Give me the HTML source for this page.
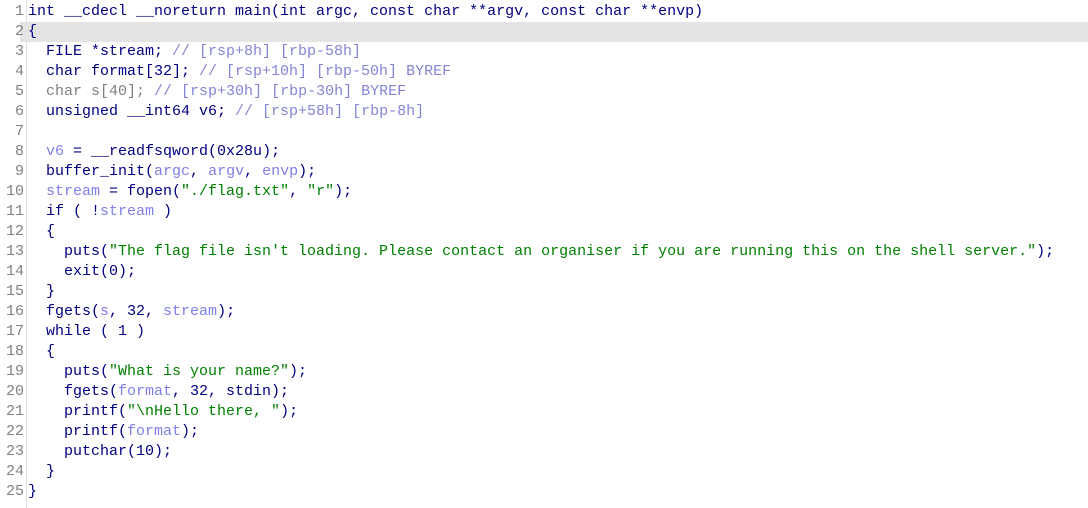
<!DOCTYPE html>
<html><head><meta charset="utf-8"><style>
html,body{margin:0;padding:0;background:#fff;width:1088px;height:508px;overflow:hidden}
#w{position:relative;width:1088px;height:508px}
.gut{position:absolute;left:26px;top:0;width:1px;height:508px;background:#e0e0e0}
.l{position:absolute;left:0;height:20px;line-height:20px;width:1088px;font-family:"Liberation Mono",monospace;font-size:15px;color:#000080;white-space:pre}
.n{position:absolute;left:0;width:24px;text-align:right;color:#808080}
.c{position:absolute;left:28px}
.hl{background:#e4e4e4;left:20px;width:1068px}
.v{color:#7f7fe8}.m{color:#8585d6}.s{color:#008000}.g{color:#808080}
</style></head><body><div id="w">
<div class="gut"></div>
<div class="l hl" style="top:22px"></div>
<div class="l" style="top:2px"><span class="n">1</span><span class="c">int __cdecl __noreturn main(int argc, const char **argv, const char **envp)</span></div>
<div class="l" style="top:22px"><span class="n">2</span><span class="c">{</span></div>
<div class="l" style="top:42px"><span class="n">3</span><span class="c">  FILE *stream; <span class="m">// [rsp+8h] [rbp-58h]</span></span></div>
<div class="l" style="top:62px"><span class="n">4</span><span class="c">  char format[32]; <span class="m">// [rsp+10h] [rbp-50h] BYREF</span></span></div>
<div class="l" style="top:82px"><span class="n">5</span><span class="c"><span class="g">  char s[40];</span> <span class="m">// [rsp+30h] [rbp-30h] BYREF</span></span></div>
<div class="l" style="top:102px"><span class="n">6</span><span class="c">  unsigned __int64 v6; <span class="m">// [rsp+58h] [rbp-8h]</span></span></div>
<div class="l" style="top:122px"><span class="n">7</span><span class="c"></span></div>
<div class="l" style="top:142px"><span class="n">8</span><span class="c">  <span class="v">v6</span> = __readfsqword(0x28u);</span></div>
<div class="l" style="top:162px"><span class="n">9</span><span class="c">  buffer_init(<span class="v">argc</span>, <span class="v">argv</span>, <span class="v">envp</span>);</span></div>
<div class="l" style="top:182px"><span class="n">10</span><span class="c">  <span class="v">stream</span> = fopen(<span class="s">"./flag.txt"</span>, <span class="s">"r"</span>);</span></div>
<div class="l" style="top:202px"><span class="n">11</span><span class="c">  if ( !<span class="v">stream</span> )</span></div>
<div class="l" style="top:222px"><span class="n">12</span><span class="c">  {</span></div>
<div class="l" style="top:242px"><span class="n">13</span><span class="c">    puts(<span class="s">"The flag file isn't loading. Please contact an organiser if you are running this on the shell server."</span>);</span></div>
<div class="l" style="top:262px"><span class="n">14</span><span class="c">    exit(0);</span></div>
<div class="l" style="top:282px"><span class="n">15</span><span class="c">  }</span></div>
<div class="l" style="top:302px"><span class="n">16</span><span class="c">  fgets(<span class="v">s</span>, 32, <span class="v">stream</span>);</span></div>
<div class="l" style="top:322px"><span class="n">17</span><span class="c">  while ( 1 )</span></div>
<div class="l" style="top:342px"><span class="n">18</span><span class="c">  {</span></div>
<div class="l" style="top:362px"><span class="n">19</span><span class="c">    puts(<span class="s">"What is your name?"</span>);</span></div>
<div class="l" style="top:382px"><span class="n">20</span><span class="c">    fgets(<span class="v">format</span>, 32, stdin);</span></div>
<div class="l" style="top:402px"><span class="n">21</span><span class="c">    printf(<span class="s">"\nHello there, "</span>);</span></div>
<div class="l" style="top:422px"><span class="n">22</span><span class="c">    printf(<span class="v">format</span>);</span></div>
<div class="l" style="top:442px"><span class="n">23</span><span class="c">    putchar(10);</span></div>
<div class="l" style="top:462px"><span class="n">24</span><span class="c">  }</span></div>
<div class="l" style="top:482px"><span class="n">25</span><span class="c">}</span></div>
</div></body></html>
